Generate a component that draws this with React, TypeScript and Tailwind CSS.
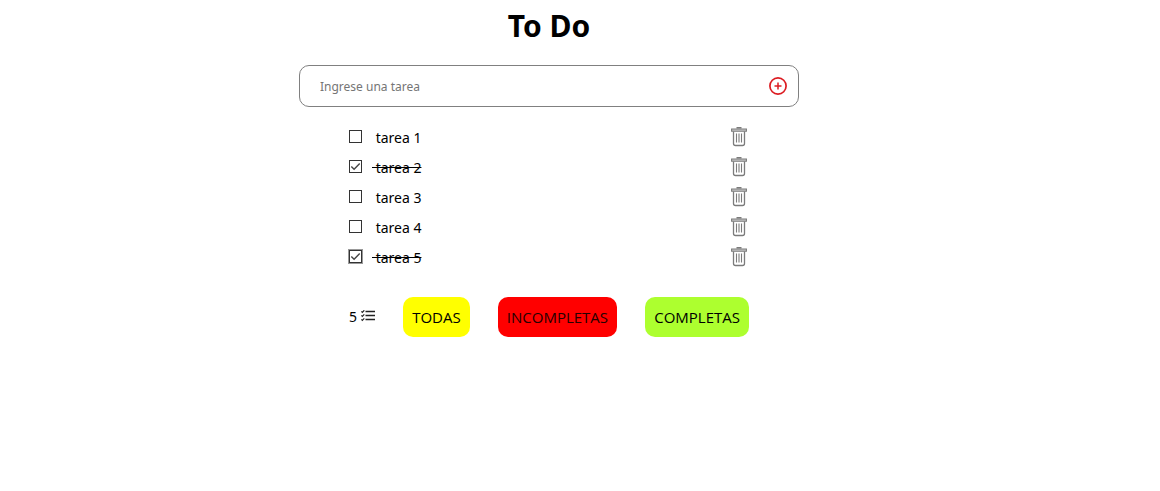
import { useState } from "react";
import type { FormEvent } from "react";

type Task = { id: number; name: string; done: boolean };
type Filter = "all" | "open" | "done";

const initialTasks: Task[] = [
  { id: 1, name: "tarea 1", done: false },
  { id: 2, name: "tarea 2", done: true },
  { id: 3, name: "tarea 3", done: false },
  { id: 4, name: "tarea 4", done: false },
  { id: 5, name: "tarea 5", done: true },
];

const filters: { key: Filter; label: string; color: string }[] = [
  { key: "all", label: "TODAS", color: "bg-[#ffff00] text-black" },
  { key: "open", label: "INCOMPLETAS", color: "bg-[#ff0000] text-[#250000]" },
  { key: "done", label: "COMPLETAS", color: "bg-[#adff2f] text-black" },
];

function AddIcon() {
  return (
    <svg className="size-5" viewBox="0 0 20 20" fill="none" stroke="#dc1c22" aria-hidden="true">
      <circle cx="10" cy="10" r="8.1" strokeWidth="1.7" />
      <path d="M10 6.5v7M6.5 10h7" strokeWidth="1.5" />
    </svg>
  );
}

function TrashIcon() {
  return (
    <svg className="h-5 w-4" viewBox="0 0 16 20" fill="none" stroke="#7b7b7b" aria-hidden="true">
      <path d="M5.5 0.8h5" strokeWidth="1.6" />
      <path d="M0.6 2h14.8v2.2H0.6z" fill="#c4c4c4" strokeWidth="1.1" />
      <path d="M2.5 4.5v12q0 2 2 2h7q2 0 2-2v-12" strokeWidth="1.3" />
      <path d="M5.5 6.5v9M8 6.5v9M10.5 6.5v9" strokeWidth="1.1" />
    </svg>
  );
}

function ListIcon() {
  return (
    <svg className="h-3.5 w-3.5" viewBox="0 0 14 14" fill="none" stroke="#222" aria-hidden="true">
      <path d="M4.5 1.5h9.5M4.5 5.5h9.5M4.5 9.5h9.5" strokeWidth="1.3" />
      <path d="M0.4 1.4l0.9 0.9 2-2M0.4 5.4l0.9 0.9 2-2M0.4 9.4l0.9 0.9 2-2" strokeWidth="1.2" />
    </svg>
  );
}

function TaskRow({ task, focused, onToggle, onRemove }: { task: Task; focused: boolean; onToggle: () => void; onRemove: () => void }) {
  return (
    <li className="flex h-[30px] items-center justify-between">
      <label className="flex items-center gap-[10px]">
        <span className="grid size-[13px]">
          <input
            type="checkbox"
            checked={task.done}
            onChange={onToggle}
            className={`col-start-1 row-start-1 size-[13px] appearance-none border border-[#333] bg-white ${focused ? "ring-1 ring-[#999]" : ""}`}
          />
          {task.done && (
            <svg className="pointer-events-none col-start-1 row-start-1 size-[13px]" viewBox="0 0 13 13" fill="none" stroke="#444" strokeWidth="1.4" aria-hidden="true">
              <path d="M2.3 6.4l2.8 2.8 5.6-5.7" />
            </svg>
          )}
        </span>
        <span className={`whitespace-pre pt-1 text-sm ${task.done ? "line-through" : ""}`}>{` ${task.name}`}</span>
      </label>
      <button type="button" aria-label={`Eliminar ${task.name}`} onClick={onRemove} className="mr-0.5 pt-0.5">
        <TrashIcon />
      </button>
    </li>
  );
}

export default function App() {
  const [tasks, setTasks] = useState(initialTasks);
  const [filter, setFilter] = useState<Filter>("all");
  const [draft, setDraft] = useState("");
  const [lastTouched, setLastTouched] = useState(5);

  const visible = tasks.filter((t) => filter === "all" || (filter === "done") === t.done);

  const addTask = (e: FormEvent) => {
    e.preventDefault();
    if (!draft.trim()) return;
    setTasks([...tasks, { id: Date.now(), name: draft.trim(), done: false }]);
    setDraft("");
  };

  const toggle = (id: number) => {
    setLastTouched(id);
    setTasks(tasks.map((t) => (t.id === id ? { ...t, done: !t.done } : t)));
  };

  return (
    <main className="flex min-h-screen flex-col items-center bg-white pr-[62px] font-['Noto_Sans',sans-serif] text-black">
      <h1 className="pt-1.5 text-3xl leading-10 font-bold">To Do</h1>
      <form onSubmit={addTask} className="mt-[19px] flex h-[42px] w-full max-w-[500px] items-center rounded-[10px] border border-[#808080] pr-[10px] pl-5">
        <input
          type="text"
          aria-label="Ingrese una tarea"
          placeholder="Ingrese una tarea"
          value={draft}
          onChange={(e) => setDraft(e.target.value)}
          className="min-w-0 flex-1 pt-0.5 text-xs outline-none placeholder:text-[#757575]"
        />
        <button type="submit" aria-label="Agregar">
          <AddIcon />
        </button>
      </form>
      <section className="w-full max-w-[400px] pt-3.5">
        <ul>
          {visible.map((t) => (
            <TaskRow
              key={t.id}
              task={t}
              focused={t.id === lastTouched}
              onToggle={() => toggle(t.id)}
              onRemove={() => setTasks(tasks.filter((o) => o.id !== t.id))}
            />
          ))}
        </ul>
        <div className="mt-[26px] flex items-center justify-between text-[15px]">
          <p className="flex items-center gap-1 text-sm">
            {tasks.length}
            <ListIcon />
          </p>
          {filters.map((f) => (
            <button key={f.key} type="button" onClick={() => setFilter(f.key)} className={`h-10 rounded-[10px] px-[9px] font-['Open_Sans',sans-serif] ${f.color}`}>
              {f.label}
            </button>
          ))}
        </div>
      </section>
    </main>
  );
}
